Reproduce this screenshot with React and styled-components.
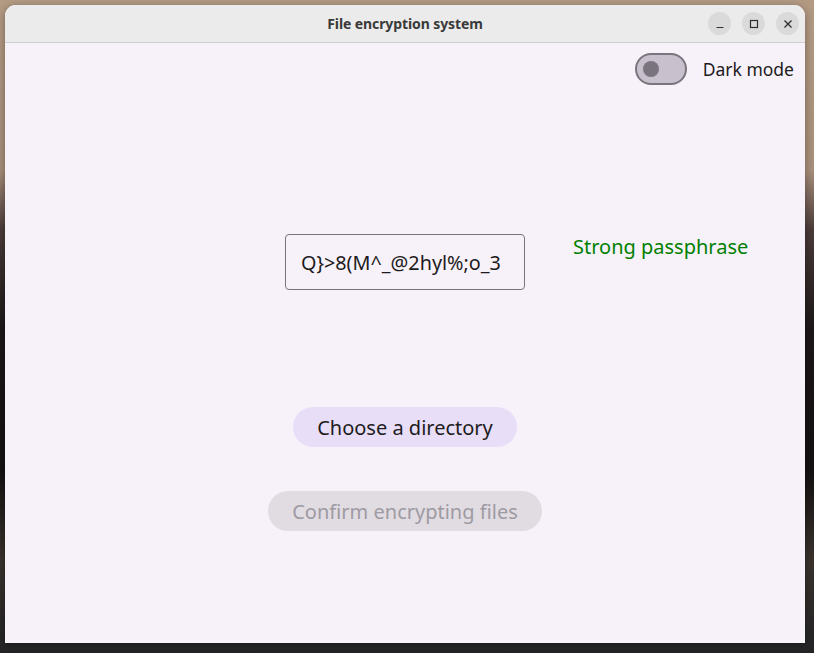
import React, { useState } from "react";
import styled, { createGlobalStyle } from "styled-components";

const Global = createGlobalStyle`
  html, body { margin: 0; padding: 0; }
  body {
    width: 814px;
    height: 653px;
    overflow: hidden;
    background:
      linear-gradient(180deg, #b39a83 0px, #a88f7b 170px, #4a3b3a 230px, #1c1718 330px, #141112 470px, #3a332e 560px, #262527 640px, #242426 653px);
    font-family: "Noto Sans", "Open Sans", sans-serif;
  }
  #root { padding: 5px 0 0 5px; }
`;

const Window = styled.div`
  width: 800px;
  height: 638px;
  border-radius: 11px 11px 0 0;
  overflow: hidden;
  display: flex;
  flex-direction: column;
  background: #f7f2f9;
  box-shadow: 0 2px 8px rgba(0, 0, 0, 0.35);
`;

const TitleBar = styled.div`
  height: 37px;
  flex: none;
  background: #ebebeb;
  border-bottom: 1px solid #cfcdcf;
  position: relative;
  display: flex;
  align-items: center;
  justify-content: center;
`;

const Title = styled.div`
  font-family: "Noto Sans", sans-serif;
  font-weight: 700;
  font-size: 14px;
  color: #3a3a3a;
  letter-spacing: -0.1px;
`;

const Controls = styled.div`
  position: absolute;
  right: 6px;
  top: 7px;
  display: flex;
  gap: 11px;
`;

const CtrlButton = styled.div`
  width: 23px;
  height: 23px;
  border-radius: 50%;
  background: #dadada;
  display: flex;
  align-items: center;
  justify-content: center;
`;

const Content = styled.div`
  flex: 1;
  display: flex;
  flex-direction: column;
`;

const TopRow = styled.div`
  display: flex;
  justify-content: flex-end;
  align-items: center;
  gap: 16px;
  padding: 10px 11px 0 0;
`;

const Track = styled.div`
  box-sizing: border-box;
  width: 52px;
  height: 32px;
  border-radius: 16px;
  border: 2px solid #79747e;
  background: #c8c0cc;
  display: flex;
  align-items: center;
  padding-left: 6px;
`;

const Thumb = styled.div`
  width: 16px;
  height: 16px;
  border-radius: 50%;
  background: #79747e;
`;

const Label = styled.span`
  font-size: 17.5px;
  color: #1d1b20;
`;

const FieldRow = styled.div`
  margin-top: 149px;
  display: grid;
  grid-template-columns: 1fr 240px 1fr;
`;

const Field = styled.div`
  grid-column: 2;
  box-sizing: border-box;
  height: 56px;
  border: 1px solid #79747e;
  border-radius: 4px;
  display: flex;
  align-items: center;
  padding: 0 15px;
  font-size: 19.8px;
  color: #1d1b20;
  white-space: nowrap;
`;

const Strength = styled.div`
  grid-column: 3;
  padding-left: 48px;
  font-size: 20px;
  line-height: 26px;
  color: #008000;
  white-space: nowrap;
`;

const Buttons = styled.div`
  display: flex;
  flex-direction: column;
  align-items: center;
  gap: 44px;
  margin-top: 117px;
`;

const Pill = styled.button`
  height: 40px;
  border: none;
  border-radius: 20px;
  padding: 0 24px;
  font-family: "Noto Sans", sans-serif;
  font-size: 20px;
  background: ${(p) => (p.$disabled ? "#e1dce2" : "#e8def8")};
  color: ${(p) => (p.$disabled ? "#9e9aa2" : "#1d1b20")};
  cursor: ${(p) => (p.$disabled ? "default" : "pointer")};
`;

export default function App() {
  const [dark] = useState(false);
  return (
    <>
      <Global />
      <Window>
        <TitleBar>
          <Title>File encryption system</Title>
          <Controls>
            <CtrlButton>
              <svg width="10" height="10" viewBox="0 0 10 10">
                <path d="M1.5 8.5h7" stroke="#2e2e2e" strokeWidth="1.2" />
              </svg>
            </CtrlButton>
            <CtrlButton>
              <svg width="10" height="10" viewBox="0 0 10 10">
                <rect x="1.5" y="1.5" width="7" height="7" fill="none" stroke="#2e2e2e" strokeWidth="1.2" />
              </svg>
            </CtrlButton>
            <CtrlButton>
              <svg width="10" height="10" viewBox="0 0 10 10">
                <path d="M1.5 1.5l7 7M8.5 1.5l-7 7" stroke="#2e2e2e" strokeWidth="1.3" />
              </svg>
            </CtrlButton>
          </Controls>
        </TitleBar>
        <Content>
          <TopRow>
            <Track aria-checked={dark}>
              <Thumb />
            </Track>
            <Label>Dark mode</Label>
          </TopRow>
          <FieldRow>
            <Field>Q}&gt;8(M^_@2hyl%;o_3</Field>
            <Strength>Strong passphrase</Strength>
          </FieldRow>
          <Buttons>
            <Pill>Choose a directory</Pill>
            <Pill $disabled>Confirm encrypting files</Pill>
          </Buttons>
        </Content>
      </Window>
    </>
  );
}
